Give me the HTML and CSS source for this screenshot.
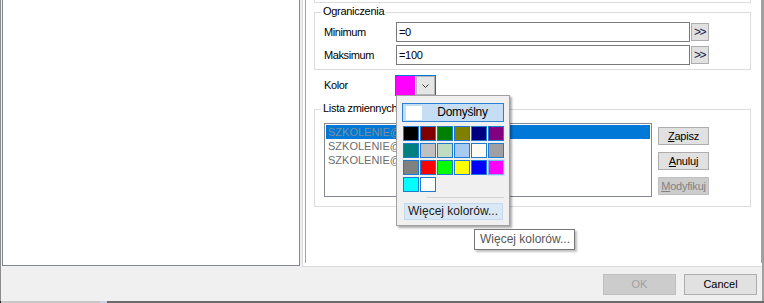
FILE: index.html
```html
<!DOCTYPE html>
<html lang="pl">
<head>
<meta charset="utf-8">
<title>Zmienna</title>
<link rel="stylesheet" href="styles.css">
</head>
<body>
<div class="window">
  <div class="main">
    <div class="left-panel"></div>
    <div class="right-outer">
      <div class="right-inner">
        <div class="group-prev"></div>
        <div class="group group-limits">
          <span class="group-title">Ograniczenia</span>
          <div class="field-row">
            <span class="field-label">Minimum</span>
            <div class="text-input">=0</div>
            <button class="expr-btn">&gt;&gt;</button>
          </div>
          <div class="field-row">
            <span class="field-label">Maksimum</span>
            <div class="text-input">=100</div>
            <button class="expr-btn">&gt;&gt;</button>
          </div>
        </div>
        <div class="color-row">
          <span class="field-label color-label">Kolor</span>
          <div class="color-combo">
            <span class="color-swatch"></span>
            <span class="combo-arrow">
              <svg width="7" height="4" viewBox="0 0 7 4"><polyline points="0.5,0.5 3.5,3.5 6.5,0.5" fill="none" stroke="#3c3c3c" stroke-width="1"/></svg>
            </span>
          </div>
        </div>
        <div class="group group-vars">
          <span class="group-title">Lista zmiennych</span>
          <div class="vars-body">
            <div class="listbox">
              <div class="list-item selected">SZKOLENIE@Ocena</div>
              <div class="list-item">SZKOLENIE@Punkty</div>
              <div class="list-item">SZKOLENIE@Wynik</div>
            </div>
            <div class="side-buttons">
              <button class="side-btn"><u>Z</u>apisz</button>
              <button class="side-btn"><u>A</u>nuluj</button>
              <button class="side-btn disabled"><u>M</u>odyfikuj</button>
            </div>
          </div>
        </div>
      </div>
    </div>
  </div>
  <div class="footer">
    <button class="dlg-btn disabled">OK</button>
    <button class="dlg-btn">Cancel</button>
  </div>

  <div class="popup">
    <div class="default-btn">
      <span class="default-swatch"></span>
      <span class="default-text">Domyślny</span>
    </div>
    <div class="palette">
      <span class="cell" style="background:#000000"></span>
      <span class="cell" style="background:#800000"></span>
      <span class="cell" style="background:#008000"></span>
      <span class="cell" style="background:#808000"></span>
      <span class="cell" style="background:#000080"></span>
      <span class="cell" style="background:#800080"></span>
      <span class="cell" style="background:#008080"></span>
      <span class="cell" style="background:#c0c0c0"></span>
      <span class="cell" style="background:#c0dcc0"></span>
      <span class="cell" style="background:#a6caf0"></span>
      <span class="cell" style="background:#fffbf0"></span>
      <span class="cell" style="background:#a0a0a4"></span>
      <span class="cell" style="background:#808080"></span>
      <span class="cell" style="background:#ff0000"></span>
      <span class="cell" style="background:#00ff00"></span>
      <span class="cell" style="background:#ffff00"></span>
      <span class="cell" style="background:#0000ff"></span>
      <span class="cell cell-current" style="background:#ff00ff"></span>
      <span class="cell" style="background:#00ffff"></span>
      <span class="cell" style="background:#ffffff"></span>
    </div>
    <div class="separator"></div>
    <div class="more-btn">Więcej kolorów...</div>
  </div>
  <div class="tooltip">Więcej kolorów...</div>
</div>
<div class="edge">
  <span class="edge-a"></span><span class="edge-b"></span><span class="edge-c"></span><span class="edge-d"></span>
</div>
</body>
</html>
```

FILE: styles.css
```css
* {
  box-sizing: border-box;
}

html, body {
  margin: 0;
  padding: 0;
}

body {
  width: 764px;
  height: 303px;
  overflow: hidden;
  background: #f0f0f0;
  font-family: "Liberation Sans", Arial, sans-serif;
  font-size: 11px;
  color: #000;
}

button {
  font-family: "Liberation Sans", Arial, sans-serif;
  margin: 0;
  padding: 0;
}

.window {
  position: relative;
  height: 301px;
  border-left: 1px solid #8c8c8c;
  border-right: 2px solid #a0a0a0;
  background: #f0f0f0;
  display: flex;
  flex-direction: column;
}

.main {
  display: flex;
  height: 267px;
}

.left-panel {
  margin-left: 1px;
  width: 298px;
  height: 266px;
  background: #fff;
  border: 1px solid #828790;
  border-top: none;
}

.right-outer {
  margin-left: 2px;
  width: 460px;
  height: 267px;
  background: #fff;
  border-left: 1px solid #dadada;
  border-bottom: 1px solid #dadada;
  padding-left: 2px;
}

.right-inner {
  width: 457px;
  height: 263px;
  border-left: 1px solid #a0a0a0;
  border-right: 1px solid #a0a0a0;
  background: #fff;
  overflow: hidden;
}

.group-prev {
  height: 3px;
  margin: 0 10px 0 8px;
  border: 1px solid #dcdcdc;
  border-top: none;
}

.group {
  position: relative;
  margin: 9px 10px 0 8px;
  border: 1px solid #dcdcdc;
}

.group-title {
  position: absolute;
  top: -8px;
  left: 6px;
  padding: 0 2px;
  background: #fff;
  line-height: 13px;
  letter-spacing: -0.3px;
  white-space: nowrap;
}

.group-limits {
  padding: 9px 0 4px 9px;
}

.field-row {
  display: flex;
  align-items: center;
  height: 20px;
}

.field-row + .field-row {
  margin-top: 3px;
}

.field-label {
  width: 72px;
  flex: none;
  letter-spacing: -0.4px;
  line-height: 13px;
}

.text-input {
  width: 294px;
  height: 20px;
  border: 1px solid #7a7a7a;
  background: #fff;
  padding-left: 2px;
  line-height: 18px;
  letter-spacing: -0.3px;
}

.expr-btn {
  margin-left: 1px;
  width: 18px;
  height: 18px;
  background: #e1e1e1;
  border: 1px solid #adadad;
  font-size: 12px;
  line-height: 15px;
  letter-spacing: -1.5px;
  padding-right: 1px;
  color: #1a1a4a;
  text-align: center;
}

.color-row {
  display: flex;
  align-items: center;
  height: 21px;
  margin: 5px 0 0 18px;
}

.color-label {
  width: 71px;
}

.color-combo {
  display: flex;
  width: 41px;
  height: 21px;
  border: 1px solid #0078d7;
  background: #fff;
}

.color-swatch {
  width: 19px;
  height: 19px;
  background: #ff00ff;
}

.combo-arrow {
  margin-left: 1px;
  width: 19px;
  height: 19px;
  background: #e5e5e5;
  border: 1px solid #b4b4b4;
  display: flex;
  align-items: center;
  justify-content: center;
  padding-top: 1px;
}

.combo-arrow svg {
  display: block;
}

.group-vars {
  margin-top: 13px;
  padding: 13px 0 9px 9px;
}

.vars-body {
  display: flex;
  align-items: flex-start;
}

.listbox {
  width: 328px;
  height: 74px;
  border: 1px solid #828790;
  padding: 1px;
  background: #fff;
}

.list-item {
  height: 14px;
  line-height: 14px;
  padding-left: 2px;
  color: #6d6d6d;
  white-space: nowrap;
  overflow: hidden;
}

.list-item.selected {
  background: #0078d7;
  color: #7f8f9f;
}

.side-buttons {
  margin: 4px 0 0 6px;
  display: flex;
  flex-direction: column;
  gap: 7px;
}

.side-btn {
  width: 51px;
  height: 18px;
  background: #e1e1e1;
  border: 1px solid #adadad;
  font-size: 11px;
  line-height: 16px;
  letter-spacing: -0.2px;
  color: #000;
}

.side-btn.disabled {
  background: #cccccc;
  border-color: #bfbfbf;
  color: #838383;
}

.footer {
  height: 34px;
  display: flex;
  justify-content: flex-end;
  align-items: flex-start;
  gap: 8px;
  padding: 7px 5px 0 0;
}

.dlg-btn {
  width: 73px;
  height: 21px;
  background: #e1e1e1;
  border: 1px solid #adadad;
  font-size: 11px;
  line-height: 19px;
  color: #000;
}

.dlg-btn.disabled {
  background: #cccccc;
  border-color: #bfbfbf;
  color: #a0a0a0;
}

/* colour drop-down overlay */
.popup {
  position: absolute;
  left: 395px;
  top: 95px;
  width: 114px;
  height: 131px;
  border: 1px solid #a0a0a0;
  background: #f0f0f0;
  box-shadow: 2px 2px 2px rgba(0, 0, 0, 0.32);
  padding: 7px 5px 5px 5px;
  font-size: 12px;
}

.default-btn {
  display: flex;
  align-items: center;
  width: 102px;
  height: 19px;
  border: 1px solid #2a80d2;
  background: #c5def5;
  padding-left: 3px;
}

.default-swatch {
  width: 16px;
  height: 14px;
  background: #fff;
  flex: none;
}

.default-text {
  flex: 1;
  text-align: center;
  line-height: 17px;
  letter-spacing: -0.3px;
  color: #000;
}

.palette {
  display: grid;
  grid-template-columns: repeat(6, 16px);
  grid-auto-rows: 15px;
  column-gap: 1px;
  row-gap: 2px;
  margin: 4px 0 0 1px;
}

.cell {
  border: 1px solid #1f7ad2;
}

.cell-current {
  border-color: #79b3ea;
  box-shadow: 0 0 0 1px #cfe4f7;
}

.separator {
  margin: 5px 0 0 25px;
  height: 1px;
  background: #d2d2d2;
}

.more-btn {
  margin: 5px 0 0 2px;
  width: 99px;
  height: 17px;
  background: #dae8f5;
  border: 1px solid #c3d9ee;
  line-height: 15px;
  padding-left: 3px;
  color: #1b1b1b;
  white-space: nowrap;
}

.tooltip {
  position: absolute;
  left: 473px;
  top: 229px;
  width: 101px;
  height: 21px;
  border: 1px solid #767676;
  background: #fff;
  box-shadow: 2px 2px 2px rgba(0, 0, 0, 0.25);
  font-size: 12px;
  line-height: 19px;
  padding-left: 5px;
  color: #575757;
  white-space: nowrap;
}

.edge {
  display: flex;
  height: 2px;
}

.edge-a {
  width: 1px;
  background: #222;
}

.edge-b {
  width: 99px;
  background: #c8c8c8;
}

.edge-c {
  width: 7px;
  background: #c6d4e6;
}

.edge-d {
  flex: 1;
  background: #6b6b6b;
}
```
